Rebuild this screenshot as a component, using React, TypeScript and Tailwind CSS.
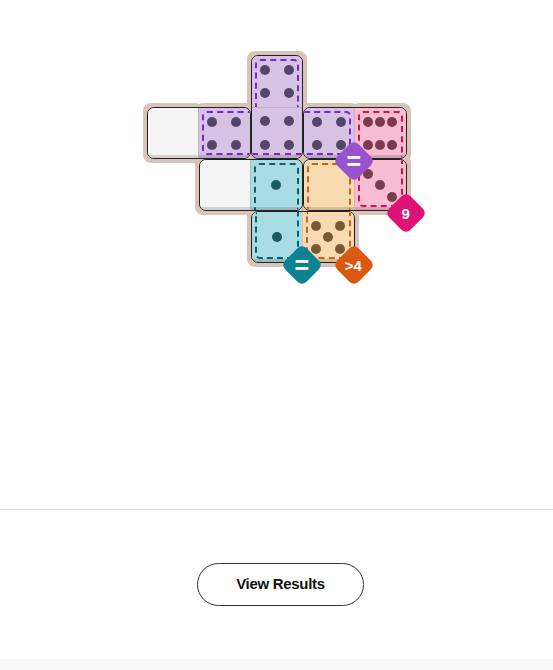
import React from 'react'

type Region = 'none' | 'purple' | 'pink' | 'teal' | 'orange'

interface Half {
  region: Region
  pips: number
  t?: boolean
  r?: boolean
  b?: boolean
  l?: boolean
}

const regionBg: Record<Region, string> = {
  none: 'bg-[#f4f4f4]',
  purple: 'bg-[#d6c3e4]',
  pink: 'bg-[#f7bdd2]',
  teal: 'bg-[#a9dce3]',
  orange: 'bg-[#f8dbb0]',
}

const dashColor: Record<Region, string> = {
  none: 'border-transparent',
  purple: 'border-[#7d22d6]',
  pink: 'border-[#d3124f]',
  teal: 'border-[#0d5f69]',
  orange: 'border-[#c7641a]',
}

const pipColor: Record<Region, string> = {
  none: 'bg-[#444]',
  purple: 'bg-[#54466a]',
  pink: 'bg-[#7a3b50]',
  teal: 'bg-[#1c5a62]',
  orange: 'bg-[#7b5a31]',
}

// which slots of a 3x3 grid carry a pip
const pipSlots: Record<number, number[]> = {
  0: [],
  1: [4],
  3: [0, 4, 8],
  4: [0, 2, 6, 8],
  5: [0, 2, 4, 6, 8],
  6: [0, 1, 2, 6, 7, 8],
}

const tiles = [
  'row-start-1 col-start-3',
  'row-start-2 col-start-1',
  'row-start-2 col-start-2',
  'row-start-2 col-start-3',
  'row-start-2 col-start-4',
  'row-start-2 col-start-5',
  'row-start-3 col-start-2',
  'row-start-3 col-start-3',
  'row-start-3 col-start-4',
  'row-start-3 col-start-5',
  'row-start-4 col-start-3',
  'row-start-4 col-start-4',
]

function Cell({ half, first, vertical }: { half: Half; first: boolean; vertical: boolean }) {
  const slots = pipSlots[half.pips] ?? []
  const edge = [
    half.t ? 'top-[3px] border-t-2' : 'top-0',
    half.r ? 'right-[3px] border-r-2' : 'right-0',
    half.b ? 'bottom-[3px] border-b-2' : 'bottom-0',
    half.l ? 'left-[3px] border-l-2' : 'left-0',
    half.t && half.l ? 'rounded-tl-[5px]' : '',
    half.t && half.r ? 'rounded-tr-[5px]' : '',
    half.b && half.l ? 'rounded-bl-[5px]' : '',
    half.b && half.r ? 'rounded-br-[5px]' : '',
  ].join(' ')
  const divider = first ? '' : vertical ? 'border-t border-black/10' : 'border-l border-black/10'
  const shade = vertical && first ? '' : 'shadow-[inset_0_-3px_0_rgba(0,0,0,0.14)]'

  return (
    <div className={`relative flex-1 ${regionBg[half.region]} ${divider} ${shade}`}>
      {half.region !== 'none' && (
        <div className={`absolute border-dashed ${dashColor[half.region]} ${edge}`} />
      )}
      <div className="absolute left-[7px] top-[8px] w-[36px] h-[35px] grid grid-cols-3 grid-rows-3">
        {Array.from({ length: 9 }).map((_, i) => (
          <div key={i} className="flex items-center justify-center">
            {slots.includes(i) && <div className={`w-[10px] h-[10px] rounded-full ${pipColor[half.region]}`} />}
          </div>
        ))}
      </div>
    </div>
  )
}

function Domino({ place, vertical, halves }: { place: string; vertical?: boolean; halves: [Half, Half] }) {
  return (
    <div
      className={`${place} flex ${vertical ? 'flex-col' : 'flex-row'} rounded-[7px] border-[1.5px] border-[#222] overflow-hidden`}
    >
      <Cell half={halves[0]} first vertical={!!vertical} />
      <Cell half={halves[1]} first={false} vertical={!!vertical} />
    </div>
  )
}

function Badge({ place, color, label }: { place: string; color: string; label: string }) {
  return (
    <div
      className={`${place} self-end justify-self-end translate-x-[14px] translate-y-[17px] w-[30px] h-[30px] rotate-45 rounded-[6px] flex items-center justify-center ${color}`}
    >
      <span
        className={`-rotate-45 text-white font-bold leading-none ${label === '=' ? 'text-[25px]' : 'text-[15px]'}`}
        style={{ fontFamily: '"Liberation Sans", Arial, sans-serif' }}
      >
        {label}
      </span>
    </div>
  )
}

export default function App() {
  return (
    <div className="w-full h-[670px] bg-white flex flex-col" style={{ fontFamily: '"Liberation Sans", Arial, sans-serif' }}>
      {/* Board */}
      <div className="h-[509px] pt-[55px] flex justify-center">
        <div className="grid grid-cols-[repeat(5,52px)] grid-rows-[repeat(4,52px)] h-fit">
          {tiles.map((t) => (
            <div key={t} className={`${t} -m-[4px] rounded-[8px] bg-[#d8c3b8]`} />
          ))}

          <Domino
            place="row-start-2 col-start-1 col-span-2"
            halves={[{ region: 'none', pips: 0 }, { region: 'purple', pips: 4, t: true, l: true, b: true }]}
          />
          <Domino
            place="row-start-1 row-span-2 col-start-3"
            vertical
            halves={[{ region: 'purple', pips: 4, t: true, l: true, r: true }, { region: 'purple', pips: 4, b: true }]}
          />
          <Domino
            place="row-start-2 col-start-4 col-span-2"
            halves={[{ region: 'purple', pips: 4, t: true, r: true, b: true }, { region: 'pink', pips: 6, t: true, l: true, r: true }]}
          />
          <Domino
            place="row-start-3 col-start-2 col-span-2"
            halves={[{ region: 'none', pips: 0 }, { region: 'teal', pips: 1, t: true, l: true, r: true }]}
          />
          <Domino
            place="row-start-3 col-start-4 col-span-2"
            halves={[{ region: 'orange', pips: 0, t: true, l: true, r: true }, { region: 'pink', pips: 3, l: true, r: true, b: true }]}
          />
          <Domino
            place="row-start-4 col-start-3 col-span-2"
            halves={[{ region: 'teal', pips: 1, l: true, r: true, b: true }, { region: 'orange', pips: 5, l: true, r: true, b: true }]}
          />

          <Badge place="row-start-2 col-start-4" color="bg-[#9852cd]" label="=" />
          <Badge place="row-start-3 col-start-5" color="bg-[#dc1277]" label="9" />
          <Badge place="row-start-4 col-start-3" color="bg-[#0e8290]" label="=" />
          <Badge place="row-start-4 col-start-4" color="bg-[#db5810]" label=">4" />
        </div>
      </div>

      {/* Actions */}
      <div className="h-[150px] border-t border-[#dddddd] flex items-center justify-center">
        <button className="ml-[8px] w-[167px] h-[43px] rounded-full border border-[#333] bg-white text-[#121212] text-[15px] font-bold tracking-[-0.3px]">
          View Results
        </button>
      </div>

      <div className="flex-1 bg-[#f8f8f8]" />
    </div>
  )
}
